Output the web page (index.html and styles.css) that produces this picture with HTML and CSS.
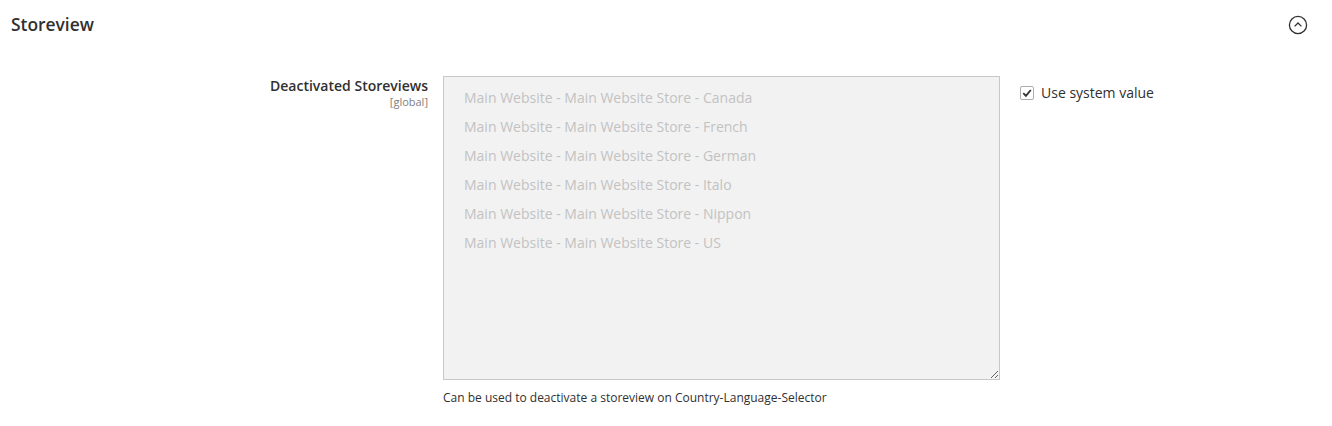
FILE: index.html
```html
<!DOCTYPE html>
<html lang="en">
<head>
  <meta charset="UTF-8" />
  <title>Storeview</title>
  <link rel="stylesheet" href="styles.css">
</head>
<body>

  <section class="section">
    <div class="section-head">
      <h2>Storeview</h2>
      <span class="toggle">
        <svg width="20" height="20" viewBox="0 0 20 20">
          <circle cx="10" cy="10" r="8.6" fill="none" stroke="#303030" stroke-width="1.3"/>
          <path d="M6.6 11.4 L10 8 L13.4 11.4" fill="none" stroke="#303030" stroke-width="1.3"/>
        </svg>
      </span>
    </div>

    <div class="field">
      <div class="label">
        <span class="label-text">Deactivated Storeviews</span>
        <span class="scope">[global]</span>
      </div>
      <div class="control">
        <div class="multiselect">
          <div class="opt">Main Website - Main Website Store - Canada</div>
          <div class="opt">Main Website - Main Website Store - French</div>
          <div class="opt">Main Website - Main Website Store - German</div>
          <div class="opt">Main Website - Main Website Store - Italo</div>
          <div class="opt">Main Website - Main Website Store - Nippon</div>
          <div class="opt">Main Website - Main Website Store - US</div>
        </div>
        <p class="note">Can be used to deactivate a storeview on Country-Language-Selector</p>
      </div>
      <label class="use-default">
        <span class="check">
          <svg width="10" height="10" viewBox="0 0 10 10">
            <path d="M1.3 5.2 L3.9 7.8 L8.8 2" fill="none" stroke="#303030" stroke-width="1.8"/>
          </svg>
        </span>
        Use system value
      </label>
    </div>
  </section>

</body>
</html>
```

FILE: styles.css
```css
* {
  margin: 0; padding: 0; box-sizing: border-box;
}

body {
  font-family: 'Open Sans', 'Noto Sans', sans-serif;
  color: #303030;
  background: #fff;
}

.section-head {
  display: flex;
  justify-content: space-between;
  align-items: center;
  padding: 11px 24px 0 11px;
  height: 36px;
}

.section-head h2 {
  font-size: 17.4px;
  font-weight: 600;
  color: #303030;
}

.toggle {
  display: flex;
  margin-top: 3px;
}

.field {
  display: flex;
  align-items: flex-start;
  margin-top: 40px;
}

.label {
  width: 428px;
  display: flex;
  flex-direction: column;
  align-items: flex-end;
  text-align: right;
}

.label-text {
  font-size: 14px;
  font-weight: 600;
  line-height: 19px;
}

.scope {
  font-size: 11px;
  color: #808080;
  line-height: 14px;
}

.control {
  margin-left: 15px;
  width: 557px;
}

.multiselect {
  height: 304px;
  background: #f2f2f2;
  border: 1px solid #c8c8c8;
  padding: 6px 20px;
  resize: vertical;
  overflow: auto;
}

.opt {
  font-size: 14px;
  line-height: 29px;
  color: #c2c2c2;
  white-space: nowrap;
}

.note {
  font-size: 12px;
  line-height: 17px;
  margin-top: 9px;
}

.use-default {
  display: flex;
  align-items: center;
  gap: 7px;
  margin-left: 20px;
  margin-top: 7px;
  font-size: 14px;
  line-height: 19px;
}

.check {
  width: 14px;
  height: 14px;
  border: 1px solid #adadad;
  border-radius: 2px;
  display: flex;
  align-items: center;
  justify-content: center;
  background: #fff;
}
```
